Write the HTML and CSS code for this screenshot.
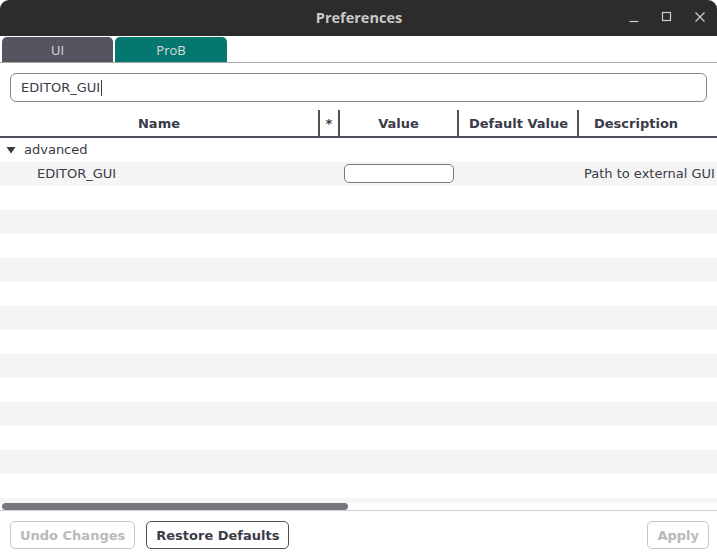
FILE: index.html
```html
<!DOCTYPE html>
<html>
<head>
<meta charset="utf-8">
<link rel="stylesheet" href="styles.css">
</head>
<body>
<div class="window">
  <header class="titlebar">
    <span class="title">Preferences</span>
    <div class="controls">
      <svg class="ctl" width="12" height="12" viewBox="0 0 12 12"><path d="M1.5 10.5h9" stroke="#cfcfcf" stroke-width="1.2"/></svg>
      <svg class="ctl" width="12" height="12" viewBox="0 0 12 12"><rect x="1.5" y="1.5" width="8" height="8" fill="none" stroke="#cfcfcf" stroke-width="1.2"/></svg>
      <svg class="ctl" width="12" height="12" viewBox="0 0 12 12"><path d="M1.5 1.5l9 9M10.5 1.5l-9 9" stroke="#cfcfcf" stroke-width="1.2"/></svg>
    </div>
  </header>
  <nav class="tabs">
    <div class="tab tab-ui">UI</div>
    <div class="tab tab-prob">ProB</div>
  </nav>
  <div class="search-wrap">
    <div class="search">EDITOR_GUI<span class="caret"></span></div>
  </div>
  <div class="table">
    <div class="thead">
      <div class="th c-name">Name</div>
      <div class="th c-star">*</div>
      <div class="th c-value">Value</div>
      <div class="th c-def">Default Value</div>
      <div class="th c-desc">Description</div>
    </div>
    <div class="tbody">
      <div class="row">
        <div class="cell group"><svg class="tri" width="10" height="8" viewBox="0 0 10 8"><path d="M0.5 1h9L5 7.5z" fill="#3a3a44"/></svg>advanced</div>
      </div>
      <div class="row stripe">
        <div class="cell c-name indent">EDITOR_GUI</div>
        <div class="cell c-star"></div>
        <div class="cell c-value"><div class="vinput"></div></div>
        <div class="cell c-def"></div>
        <div class="cell c-desc">Path to external GUI</div>
      </div>
      <div class="row"></div><div class="row stripe"></div>
      <div class="row"></div><div class="row stripe"></div>
      <div class="row"></div><div class="row stripe"></div>
      <div class="row"></div><div class="row stripe"></div>
      <div class="row"></div><div class="row stripe"></div>
      <div class="row"></div><div class="row stripe"></div>
      <div class="row"></div><div class="row stripe"></div>
    </div>
    <div class="hscroll"><div class="thumb"></div></div>
  </div>
  <footer class="footer">
    <button class="btn disabled">Undo Changes</button>
    <button class="btn">Restore Defaults</button>
    <span class="spacer"></span>
    <button class="btn disabled apply">Apply</button>
  </footer>
</div>
</body>
</html>
```

FILE: styles.css
```css
* { box-sizing: border-box; }
html, body { margin: 0; padding: 0; background: #ffffff; }
body { width: 717px; height: 558px; overflow: hidden; font-family: "DejaVu Sans", sans-serif; font-size: 13px; color: #3a3a46; }
.window { width: 717px; height: 558px; display: flex; flex-direction: column; background: #fff; }

.titlebar { height: 36px; background: #2c2c2c; border-radius: 9px 9px 0 0; display: flex; align-items: center; justify-content: center; position: relative; flex: none; }
.title { font-family: "Open Sans", "Noto Sans", sans-serif; font-weight: 700; font-size: 14.5px; color: #c9c9c9; margin-left: 1px; margin-top: -1px; }
.controls { position: absolute; right: 11px; top: 11px; display: flex; gap: 21px; }
.ctl { display: block; }

.tabs { flex: none; height: 27px; padding: 1px 0 0 2px; display: flex; gap: 2px; border-bottom: 1px solid #a6a6a6; }
.tab { width: 111px; height: 25px; border-radius: 5px 5px 0 0; font-family: "Open Sans", "Noto Sans", sans-serif; font-size: 13px; color: #dcdcdc; display: flex; align-items: center; justify-content: center; }
.tab-ui { background: #56555f; }
.tab-prob { background: #04786f; width: 112px; }

.search-wrap { flex: none; padding: 10px 10px 8px 10px; }
.search { height: 29px; border: 1px solid #8a8a8a; border-radius: 6px; padding: 0 0 0 10px; display: flex; align-items: center; color: #3a3a46; }
.caret { display: inline-block; width: 1px; height: 16px; background: #3a3a46; margin-left: 1px; }

.table { flex: 1; display: flex; flex-direction: column; overflow: hidden; }
.thead { flex: none; height: 28px; display: flex; border-bottom: 2px solid #50505a; }
.th { font-weight: 700; color: #3a3a48; display: flex; align-items: center; justify-content: center; border-right: 2px solid #50505a; height: 26px; padding-top: 1px; }
.c-name { width: 320px; flex: none; }
.c-star { width: 20px; flex: none; }
.c-value { width: 119px; flex: none; }
.c-def { width: 120px; flex: none; }
.c-desc { flex: 1; }
.th.c-desc { border-right: none; justify-content: flex-start; padding-left: 15px; }
.th.c-def { padding-left: 1px; }

.tbody { flex: 1; overflow: hidden; }
.row { height: 24px; display: flex; align-items: center; }
.row.stripe { background: #f5f5f5; }
.cell { height: 24px; display: flex; align-items: center; white-space: nowrap; padding-bottom: 1px; }
.group { padding-left: 6px; }
.tri { margin-right: 8px; margin-top: 1px; }
.indent { padding-left: 37px; }
.c-value.cell { justify-content: flex-start; padding-left: 4px; padding-bottom: 0; }
.vinput { width: 110px; height: 19px; border: 1px solid #77777d; border-radius: 5px; background: #fff; margin-top: -1px; }
.cell.c-desc { padding-left: 5px; }

.hscroll { flex: none; height: 8px; border-bottom: 1px solid #d0d0d0; padding: 0 0 0 2px; }
.thumb { width: 346px; height: 7px; background: #77777f; border-radius: 4px; }

.footer { flex: none; height: 47px; display: flex; align-items: flex-start; padding: 10px 10px 0 10px; gap: 11px; }
.spacer { flex: 1; }
.btn { font-family: "DejaVu Sans", sans-serif; font-weight: 700; font-size: 13px; height: 28px; border: 1px solid #4e4e58; border-radius: 5px; background: #fff; color: #3c3c48; padding: 0 9px; }
.btn.disabled { border-color: #c6c6c6; color: #b9b9b9; }
.btn.apply { padding: 0 9px; margin-right: -2px; }
```
